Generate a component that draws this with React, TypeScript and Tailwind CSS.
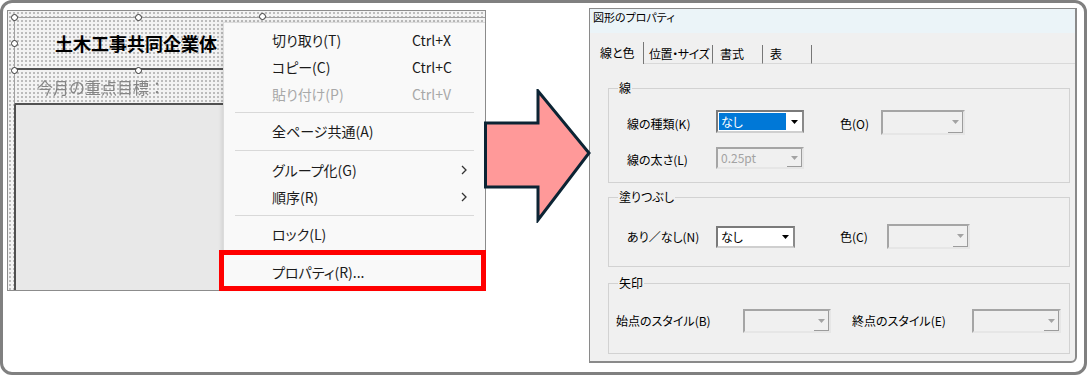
import React from 'react';

// dotted editing-grid background used on the left canvas
const dots =
  'bg-[#f3f3f3] bg-[radial-gradient(circle,#bcbcbc_0.8px,transparent_1.3px)] bg-[length:4px_4px]';

type ComboProps = {
  className: string;
  value?: string;
  selected?: boolean;
  disabled?: boolean;
};

const Combo: React.FC<ComboProps> = ({ className, value, selected, disabled }) => {
  return (
    <div
      className={`flex border-2 ${
        disabled
          ? 'border-t-[#a5a5a5] border-l-[#a5a5a5] border-r-[#e6e6e6] border-b-[#e6e6e6] bg-[#f0f0f0]'
          : 'border-t-[#7a7a7a] border-l-[#7a7a7a] border-r-[#8a8a8a] border-b-[#cfcfcf] bg-white'
      } ${className}`}
    >
      <div className="flex-1 flex p-[1px]">
        {value && (
          <span
            className={`flex-1 flex items-center pl-[2px] text-[12px] leading-none ${
              selected ? 'bg-[#0078d7] text-white' : disabled ? 'text-[#a3a3a3]' : 'text-black'
            }`}
          >
            {value}
          </span>
        )}
      </div>
      <div
        className={`w-[15px] flex items-center justify-center ${
          disabled ? 'border-r border-b border-[#9c9c9c]' : ''
        }`}
      >
        <svg width="7" height="4" viewBox="0 0 7 4">
          <polygon points="0,0 7,0 3.5,4" fill={disabled ? '#a3a3a3' : '#000'} />
        </svg>
      </div>
    </div>
  );
};

const Group: React.FC<{ label: string; className: string; children: React.ReactNode }> = ({
  label,
  className,
  children,
}) => (
  <div className={`relative ml-[18px] mr-[5px] border border-[#d2d2d2] ${className}`}>
    <span className="absolute left-[9px] -top-[9px] px-[1px] bg-[#f0f0f0] leading-[16px]">{label}</span>
    {children}
  </div>
);

const MenuRow: React.FC<{ label: string; shortcut?: string; sub?: boolean; disabled?: boolean }> = ({
  label,
  shortcut,
  sub,
  disabled,
}) => (
  <div className={`h-[27px] flex items-center pl-[48px] ${disabled ? 'text-[#a8a8a8]' : 'text-[#1b1b1b]'}`}>
    <span className={sub ? 'w-[189px]' : 'w-[140px]'}>{label}</span>
    {shortcut && <span>{shortcut}</span>}
    {sub && (
      <svg width="6" height="10" viewBox="0 0 6 10">
        <polyline points="1,1 5,5 1,9" fill="none" stroke="#333" strokeWidth="1.3" />
      </svg>
    )}
  </div>
);

const Sep: React.FC<{ h: string }> = ({ h }) => (
  <div className={`${h} flex items-center mx-[11px]`}>
    <div className="h-px flex-1 bg-[#d9d9d9]" />
  </div>
);

const App: React.FC = () => {
  return (
    <div className="w-[1087px] h-[375px] bg-white font-['Noto_Sans_CJK_JP',sans-serif]">
      <div className="relative w-full h-full border-[3px] border-[#808080] rounded-[12px] flex items-start">
        {/* left: canvas with context menu */}
        <div className={`relative ml-[4px] mt-[7px] w-[479px] h-[281px] border border-[#8c8c8c] flex flex-col ${dots}`}>
          <div className="h-[6px]" />
          <div className="flex-1 flex">
            <div className="w-[6px]" />
            <div className="flex-1 flex flex-col">
              <div className="h-[53px] border-t border-l border-[#a0a0a0] border-b-2 border-b-[#505050] flex items-center pl-[40px] text-[18px] font-bold leading-none text-black">
                土木工事共同企業体
              </div>
              <div className="h-[35px] border-l border-l-[#a0a0a0] border-b-2 border-b-[#505050] flex items-center pl-[22px] text-[16px] leading-none text-[#858585] blur-[0.3px]">
                今月の重点目標：
              </div>
              <div className="flex-1 bg-[#e8e8e8] border-l-2 border-[#505050]" />
            </div>
          </div>

          {/* selection handles */}
          <div className="absolute left-[3px] top-[3px] w-[7px] h-[7px] rounded-full bg-white border border-[#333]" />
          <div className="absolute left-[127px] top-[3px] w-[7px] h-[7px] rounded-full bg-white border border-[#333]" />
          <div className="absolute left-[251px] top-[2px] w-[7px] h-[7px] rounded-full bg-white border border-[#333]" />
          <div className="absolute left-[3px] top-[29px] w-[7px] h-[7px] rounded-full bg-white border border-[#333]" />
          <div className="absolute left-[3px] top-[56px] w-[7px] h-[7px] rounded-full bg-white border border-[#333]" />
          <div className="absolute left-[127px] top-[56px] w-[7px] h-[7px] rounded-full bg-white border border-[#333]" />

          {/* context menu */}
          <div className="absolute left-[215px] top-[11px] w-[262px] bottom-0 bg-[#f9f9f9] border-t border-l border-[#dcdcdc] shadow-[-2px_0_3px_rgba(0,0,0,0.08)] pt-[3px] text-[14px] leading-none [font-feature-settings:'palt']">
            <MenuRow label="切り取り(T)" shortcut="Ctrl+X" />
            <MenuRow label="コピー(C)" shortcut="Ctrl+C" />
            <MenuRow label="貼り付け(P)" shortcut="Ctrl+V" disabled />
            <Sep h="h-[10px]" />
            <MenuRow label="全ページ共通(A)" />
            <Sep h="h-[12px]" />
            <MenuRow label="グループ化(G)" sub />
            <MenuRow label="順序(R)" sub />
            <Sep h="h-[10px]" />
            <MenuRow label="ロック(L)" />
            <div className="mt-[11px]">
              <MenuRow label="プロパティ(R)..." />
            </div>
          </div>

          {/* highlight */}
          <div className="absolute left-[211px] top-[239px] w-[267px] h-[41px] border-[5px] border-[#ff0000]" />
        </div>

        {/* right: properties dialog */}
        <div className="ml-[103px] mt-[5px] w-[488px] h-[355px] border border-[#8a8a8a] border-r-2 border-b-2 rounded-br-[6px] bg-[#f0f0f0] flex flex-col overflow-hidden text-[12px] text-black [font-feature-settings:'palt']">
          <div className="h-[24px] bg-[#ebf4f8] pl-[3px] pt-[1px] text-[11px] leading-[14px]">図形のプロパティ</div>
          <div className="flex mt-[9px] h-[22px] leading-none whitespace-nowrap">
            <div className="w-[54px] h-[22px] border-r border-[#777] pl-[10px] flex items-center">線と色</div>
            <div className="w-[69px] mt-[3px] border-r border-b border-r-[#777] border-b-[#d9d9d9] pl-[5px] flex items-center tracking-[-0.4px]">
              位置・サイズ
            </div>
            <div className="w-[50px] mt-[3px] border-r border-b border-r-[#777] border-b-[#d9d9d9] pl-[7px] flex items-center">
              書式
            </div>
            <div className="w-[49px] mt-[3px] border-r border-b border-r-[#777] border-b-[#d9d9d9] pl-[7px] flex items-center">
              表
            </div>
            <div className="flex-1 border-b border-[#d9d9d9]" />
          </div>

          <Group label="線" className="mt-[24px] h-[95px] pt-[21px] pl-[18px] flex flex-col gap-[12px]">
            <div className="flex items-start h-[25px]">
              <span className="w-[89px] mt-[6px] leading-[16px]">線の種類(K)</span>
              <Combo className="w-[88px] h-[23px]" value="なし" selected />
              <span className="ml-[36px] w-[41px] mt-[6px] leading-[16px]">色(O)</span>
              <Combo className="w-[84px] h-[25px]" disabled />
            </div>
            <div className="flex items-start h-[22px]">
              <span className="w-[89px] mt-[5px] leading-[16px]">線の太さ(L)</span>
              <Combo className="w-[88px] h-[22px]" value="0.25pt" disabled />
            </div>
          </Group>

          <Group label="塗りつぶし" className="mt-[14px] h-[70px] pt-[26px] pl-[18px]">
            <div className="flex items-center h-[25px]">
              <span className="w-[89px] leading-[16px]">あり／なし(N)</span>
              <Combo className="w-[79px] h-[22px]" value="なし" />
              <span className="ml-[45px] w-[47px] leading-[16px]">色(C)</span>
              <Combo className="w-[83px] h-[25px]" disabled />
            </div>
          </Group>

          <Group label="矢印" className="mt-[16px] h-[71px] pt-[25px] pl-[7px]">
            <div className="flex items-center h-[24px]">
              <span className="w-[127px] leading-[16px]">始点のスタイル(B)</span>
              <Combo className="w-[88px] h-[24px]" disabled />
              <span className="ml-[21px] w-[120px] leading-[16px]">終点のスタイル(E)</span>
              <Combo className="w-[89px] h-[24px]" disabled />
            </div>
          </Group>
        </div>

        {/* big arrow between the two screenshots */}
        <svg className="absolute left-[481px] top-[86px]" width="108" height="134" viewBox="0 0 108 134">
          <polygon
            points="1.5,34 54,34 54,2 105,64 54,131 54,98 1.5,98"
            fill="#ff9999"
            stroke="#0c2434"
            strokeWidth="3"
            strokeLinejoin="miter"
          />
        </svg>
      </div>
    </div>
  );
};

export default App;
